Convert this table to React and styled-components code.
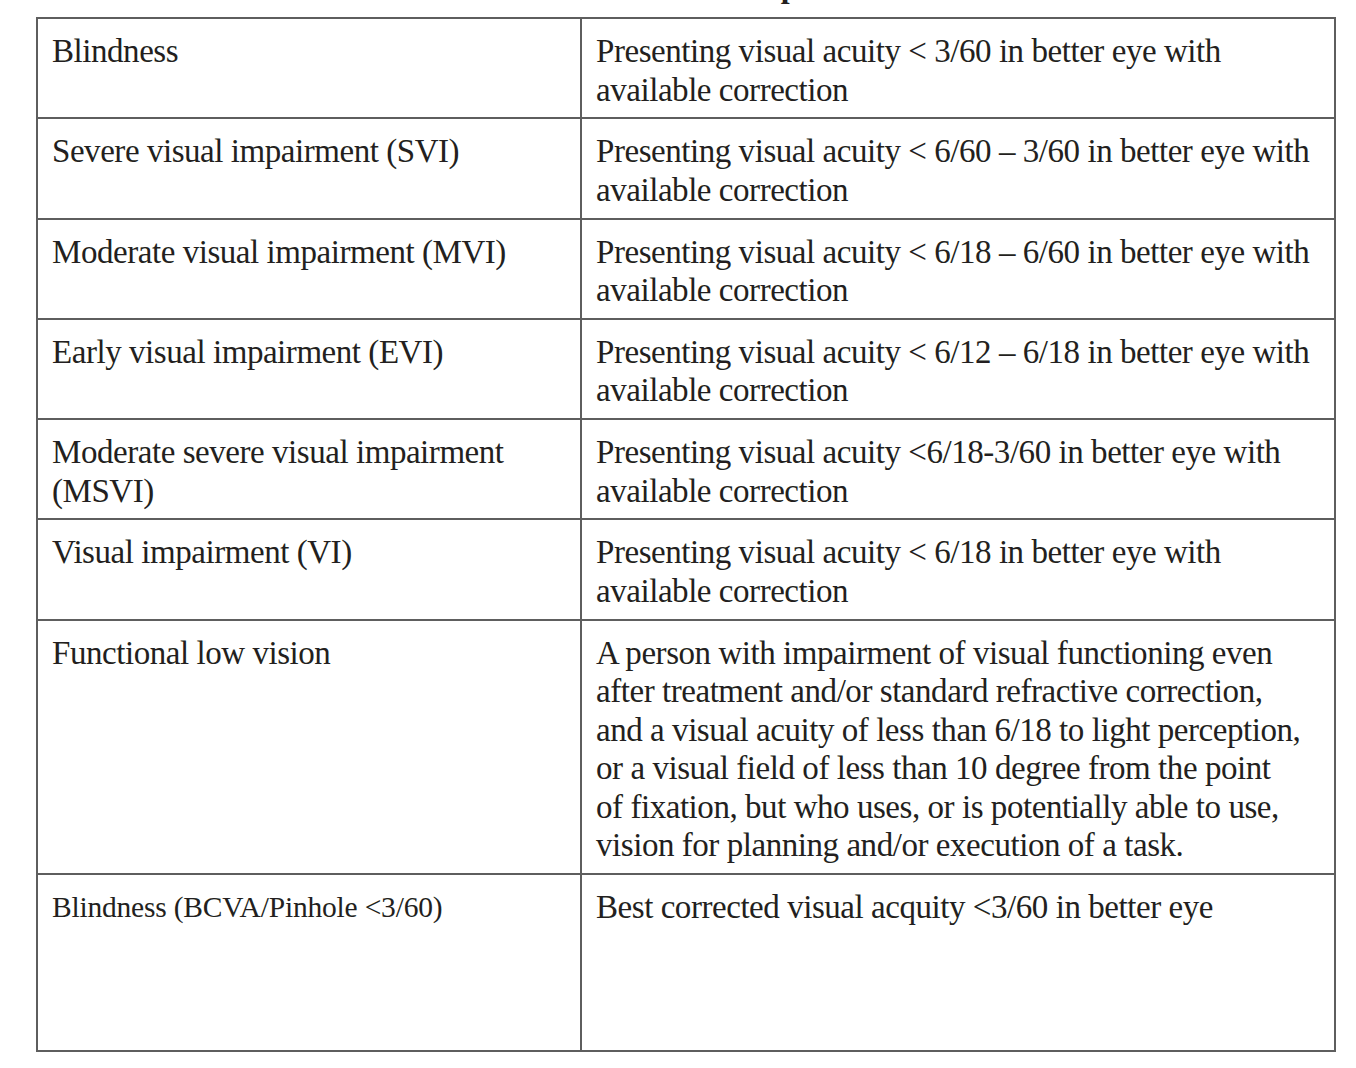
import React from "react";
import styled, { createGlobalStyle } from "styled-components";

const GlobalStyle = createGlobalStyle`
  html, body {
    margin: 0;
    padding: 0;
    background: #ffffff;
  }
  body {
    font-family: "Liberation Serif", "Times New Roman", serif;
    color: #231f20;
  }
`;

const Page = styled.div`
  width: 1356px;
  min-height: 1068px;
  overflow: hidden;
`;

const Title = styled.h2`
  margin: -34px 0 11px 36px;
  height: 40px;
  line-height: 40px;
  font-size: 32px;
  font-weight: 700;
  text-align: center;
  width: 1300px;
  color: #231f20;
`;

const Table = styled.div`
  display: grid;
  grid-template-columns: 544px 754px;
  margin-left: 36px;
  border-top: 2px solid #5e5e5e;
  border-left: 2px solid #5e5e5e;
  width: max-content;
`;

const Cell = styled.div`
  border-right: 2px solid #5e5e5e;
  border-bottom: 2px solid #5e5e5e;
  padding: 13px 14px 8.3px 14px;
  min-height: ${(p) => (p.$tall ? "153.5px" : "auto")};
  font-size: ${(p) => (p.$small ? "29.5px" : "33px")};
  letter-spacing: ${(p) => (p.$small ? "-0.2px" : "-0.45px")};
  line-height: 38.5px;
  white-space: nowrap;
  color: #231f20;
`;

const Line = styled.span`
  display: block;
`;

const rows = [
  {
    term: ["Blindness"],
    def: ["Presenting visual acuity < 3/60 in better eye with", "available correction"],
  },
  {
    term: ["Severe visual impairment (SVI)"],
    def: ["Presenting visual acuity < 6/60 \u2013 3/60 in better eye with", "available correction"],
  },
  {
    term: ["Moderate visual impairment (MVI)"],
    def: ["Presenting visual acuity < 6/18 \u2013 6/60 in better eye with", "available correction"],
  },
  {
    term: ["Early visual impairment (EVI)"],
    def: ["Presenting visual acuity < 6/12 \u2013 6/18 in better eye with", "available correction"],
  },
  {
    term: ["Moderate severe visual impairment", "(MSVI)"],
    def: ["Presenting visual acuity <6/18-3/60 in better eye with", "available correction"],
  },
  {
    term: ["Visual impairment (VI)"],
    def: ["Presenting visual acuity < 6/18 in better eye with", "available correction"],
  },
  {
    term: ["Functional low vision"],
    def: [
      "A person with impairment of visual functioning even",
      "after treatment and/or standard refractive correction,",
      "and a visual acuity of less than 6/18 to light perception,",
      "or a visual field of less than 10 degree from the point",
      "of fixation, but who uses, or is potentially able to use,",
      "vision for planning and/or execution of a task.",
    ],
  },
  {
    term: ["Blindness (BCVA/Pinhole <3/60)"],
    def: ["Best corrected visual acquity <3/60 in better eye"],
    small: true,
    tall: true,
  },
];

export default function App() {
  return (
    <Page>
      <GlobalStyle />
      <Title>Definitions of visual impairment</Title>
      <Table>
        {rows.map((r, i) => (
          <React.Fragment key={i}>
            <Cell $small={r.small} $tall={r.tall}>
              {r.term.map((t, j) => (
                <Line key={j}>{t}</Line>
              ))}
            </Cell>
            <Cell $tall={r.tall}>
              {r.def.map((t, j) => (
                <Line key={j}>{t}</Line>
              ))}
            </Cell>
          </React.Fragment>
        ))}
      </Table>
    </Page>
  );
}
